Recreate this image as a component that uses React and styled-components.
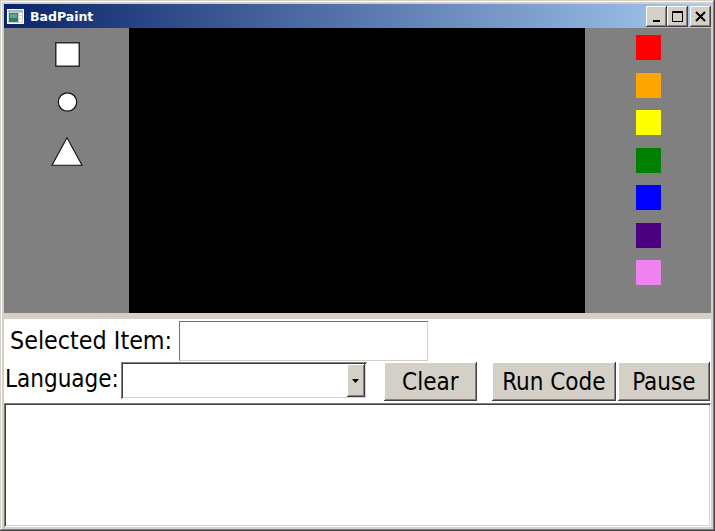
import React from "react";
import styled, { createGlobalStyle } from "styled-components";

const GlobalStyle = createGlobalStyle`
  html, body { margin: 0; padding: 0; background: #d4d0c8; }
  * { box-sizing: border-box; }
`;

const raised = `
  box-shadow: inset -1px -1px #404040, inset 1px 1px #ffffff,
    inset -2px -2px #808080, inset 2px 2px #d4d0c8;
`;

const sunken = `
  box-shadow: inset 1px 1px #808080, inset -1px -1px #ffffff,
    inset 2px 2px #404040, inset -2px -2px #d4d0c8;
`;

const Window = styled.div`
  width: 715px;
  height: 531px;
  padding: 4px;
  background: #d4d0c8;
  display: flex;
  flex-direction: column;
  box-shadow: inset -1px -1px #404040, inset 1px 1px #d4d0c8,
    inset -2px -2px #808080, inset 2px 2px #ffffff;
  font-family: "DejaVu Sans Condensed", "DejaVu Sans", sans-serif;
  font-stretch: condensed;
`;

const TitleBar = styled.div`
  height: 24px;
  display: flex;
  align-items: center;
  padding: 0 0 0 3px;
  background: linear-gradient(to right, #0a246a, #a6caf0);
`;

const Title = styled.span`
  margin-left: 6px;
  color: #fff;
  font-family: "DejaVu Sans", sans-serif;
  font-stretch: normal;
  font-weight: bold;
  font-size: 12.5px;
`;

const CaptionGroup = styled.div`
  margin-left: auto;
  display: flex;
  align-items: center;
`;

const CaptionButton = styled.button`
  flex: none;
  width: 21px;
  height: 21px;
  padding: 0;
  border: none;
  margin-left: ${(p) => (p.$gap ? "2px" : "0")};
  background: #d4d0c8;
  display: flex;
  align-items: center;
  justify-content: center;
  ${raised}
`;

const Top = styled.div`
  height: 285px;
  display: grid;
  grid-template-columns: 125px 456px 1fr;
`;

const ShapePanel = styled.div`
  background: #808080;
  display: flex;
  flex-direction: column;
  align-items: center;
  padding-top: 14px;
  gap: 25px;
  padding-left: 1px;
`;

const Canvas = styled.div`
  background: #000;
`;

const ColorPanel = styled.div`
  background: #808080;
  display: flex;
  flex-direction: column;
  align-items: center;
  padding-top: 7px;
  gap: 12.5px;
  padding-left: 1px;
`;

const Swatch = styled.div`
  width: 25px;
  height: 25px;
  background: ${(p) => p.$color};
`;

const Bottom = styled.div`
  flex: 1;
  margin-top: 6px;
  background: #fff;
  display: flex;
  flex-direction: column;
`;

const Row = styled.div`
  display: flex;
  align-items: ${(p) => p.$align || "center"};
  height: ${(p) => p.$h}px;
  gap: ${(p) => p.$gap || 0}px;
  padding-left: ${(p) => p.$pl || 0}px;
`;

const Label = styled.span`
  font-size: ${(p) => p.$size || 24}px;
  color: #000;
  white-space: nowrap;
  margin-top: ${(p) => p.$mt || 0}px;
`;

const TextBox = styled.div`
  width: 249px;
  height: 40px;
  background: #fff;
  border-top: 1px solid #707070;
  border-left: 1px solid #707070;
  border-right: 1px solid #d4d0c8;
  border-bottom: 1px solid #d4d0c8;
`;

const Combo = styled.div`
  width: 246px;
  height: 37px;
  margin-left: 2px;
  padding: 2px;
  background: #fff;
  display: flex;
  justify-content: flex-end;
  ${sunken}
`;

const ComboArrow = styled.div`
  width: 18px;
  height: 100%;
  background: #d4d0c8;
  display: flex;
  align-items: center;
  justify-content: center;
  ${raised}
`;

const Button = styled.button`
  width: ${(p) => p.$w}px;
  height: 39px;
  margin-left: ${(p) => p.$ml || 0}px;
  padding: 0;
  border: none;
  background: #d4d0c8;
  font-family: inherit;
  font-stretch: condensed;
  font-size: 24px;
  color: #000;
  ${raised}
`;

const CodeArea = styled.div`
  flex: 1;
  margin-top: 1px;
  background: #fff;
  ${sunken}
`;

const colors = ["#ff0000", "#ffa500", "#ffff00", "#008000", "#0000ff", "#4b0082", "#ee82ee"];

function AppIcon() {
  return (
    <svg width="17" height="15" viewBox="0 0 17 15">
      <rect x="0.5" y="0.5" width="16" height="14" fill="#d4d0c8" stroke="#fff" />
      <rect x="1" y="1" width="15" height="2" fill="#9db9d6" />
      <rect x="2" y="4" width="9" height="9" fill="#2f7c6e" />
      <rect x="3" y="5" width="7" height="4" fill="#5fa58f" />
      <rect x="12" y="4" width="3" height="2" fill="#fff" />
      <rect x="12" y="7" width="3" height="2" fill="#fff" />
      <rect x="12" y="10" width="3" height="3" fill="#fff" />
    </svg>
  );
}

export default function App() {
  return (
    <>
      <GlobalStyle />
      <Window>
        <TitleBar>
          <AppIcon />
          <Title>BadPaint</Title>
          <CaptionGroup>
            <CaptionButton>
              <svg width="13" height="13" viewBox="0 0 13 13">
                <rect x="3" y="10" width="7" height="2" fill="#000" />
              </svg>
            </CaptionButton>
            <CaptionButton>
              <svg width="13" height="13" viewBox="0 0 13 13">
                <rect x="1.5" y="1.5" width="10" height="10" fill="none" stroke="#000" />
                <rect x="1" y="1" width="11" height="2" fill="#000" />
              </svg>
            </CaptionButton>
            <CaptionButton $gap>
              <svg width="13" height="13" viewBox="0 0 13 13">
                <path d="M2 2 L11 11 M11 2 L2 11" stroke="#000" strokeWidth="2" />
              </svg>
            </CaptionButton>
          </CaptionGroup>
        </TitleBar>
        <Top>
          <ShapePanel>
            <svg width="25" height="25" viewBox="0 0 25 25">
              <rect x="0.75" y="0.75" width="23.5" height="23.5" fill="#fff" stroke="#2b2b2b" strokeWidth="1.5" />
            </svg>
            <svg width="21" height="20" viewBox="0 0 21 20">
              <circle cx="10.5" cy="10" r="9.2" fill="#fff" stroke="#111" strokeWidth="1.2" />
            </svg>
            <svg width="32" height="29" viewBox="0 0 32 29">
              <polygon points="16,0.8 1,28.3 31,28.3" fill="#fff" stroke="#111" strokeWidth="1.1" />
            </svg>
          </ShapePanel>
          <Canvas />
          <ColorPanel>
            {colors.map((c) => (
              <Swatch key={c} $color={c} />
            ))}
          </ColorPanel>
        </Top>
        <Bottom>
          <Row $h={43} $gap={7} $pl={6}>
            <Label $size={24.8}>Selected Item:</Label>
            <TextBox />
          </Row>
          <Row $h={40} $align="flex-start" $pl={1}>
            <Label $mt={3}>Language:</Label>
            <Combo>
              <ComboArrow>
                <svg width="7" height="4" viewBox="0 0 7 4">
                  <polygon points="0,0 7,0 3.5,4" fill="#000" />
                </svg>
              </ComboArrow>
            </Combo>
            <Button $w={93} $ml={17}>Clear</Button>
            <Button $w={124} $ml={15}>Run Code</Button>
            <Button $w={92} $ml={2}>Pause</Button>
          </Row>
          <CodeArea />
        </Bottom>
      </Window>
    </>
  );
}
